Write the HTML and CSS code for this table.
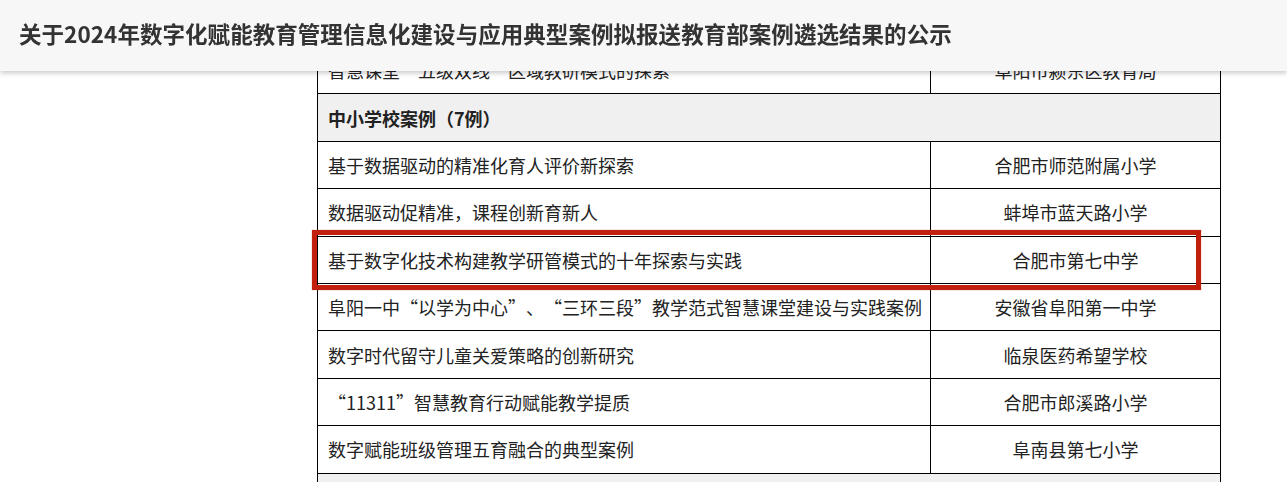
FILE: index.html
```html
<!DOCTYPE html>
<html lang="zh-CN">
<head>
<meta charset="utf-8">
<title>公示</title>
<link rel="stylesheet" href="styles.css">
</head>
<body>
<header class="topbar">
  <h1 class="topbar-title">关于2024年数字化赋能教育管理信息化建设与应用典型案例拟报送教育部案例遴选结果的公示</h1>
</header>
<main class="content">
  <div class="table-wrap">
    <table class="cases">
      <colgroup><col class="col-name"><col class="col-unit"></colgroup>
      <tbody>
        <tr><td class="name">智慧课堂<span class="q qo">“</span>五级双线<span class="q qc">”</span>区域教研模式的探索</td><td class="unit">阜阳市颍东区教育局</td></tr>
        <tr class="section"><td colspan="2">中小学校案例（7例）</td></tr>
        <tr><td class="name">基于数据驱动的精准化育人评价新探索</td><td class="unit">合肥市师范附属小学</td></tr>
        <tr><td class="name">数据驱动促精准，课程创新育新人</td><td class="unit">蚌埠市蓝天路小学</td></tr>
        <tr><td class="name">基于数字化技术构建教学研管模式的十年探索与实践</td><td class="unit">合肥市第七中学</td></tr>
        <tr><td class="name">阜阳一中<span class="q qo">“</span>以学为中心<span class="q qc">”</span><span class="q qd">、</span><span class="q qo">“</span>三环三段<span class="q qc">”</span>教学范式智慧课堂建设与实践案例</td><td class="unit">安徽省阜阳第一中学</td></tr>
        <tr><td class="name">数字时代留守儿童关爱策略的创新研究</td><td class="unit">临泉医药希望学校</td></tr>
        <tr><td class="name"><span class="q qo">“</span>11311<span class="q qc">”</span>智慧教育行动赋能教学提质</td><td class="unit">合肥市郎溪路小学</td></tr>
        <tr><td class="name">数字赋能班级管理五育融合的典型案例</td><td class="unit">阜南县第七小学</td></tr>
        <tr class="section"><td colspan="2">&nbsp;</td></tr>
      </tbody>
    </table>
    <div class="highlight"></div>
  </div>
</main>
</body>
</html>
```

FILE: styles.css
```css
* { box-sizing: border-box; }
html, body {
  margin: 0;
  padding: 0;
  background: #ffffff;
  overflow: hidden;
}
body {
  font-family: "Noto Sans CJK SC", "Noto Sans", sans-serif;
  color: #222;
}
.topbar {
  position: fixed;
  top: 0;
  left: 0;
  right: 0;
  height: 71px;
  background: #f7f7f7;
  box-shadow: 0 2px 5px rgba(0, 0, 0, 0.22);
  display: flex;
  align-items: center;
  padding-left: 19px;
  z-index: 10;
}
.topbar-title {
  margin: 0;
  font-size: 22.5px;
  font-weight: 700;
  color: #333;
  line-height: 1;
  letter-spacing: 0.05px;
  padding-bottom: 4px;
}
.content {
  padding-top: 46px;
  padding-left: 317px;
}
.table-wrap {
  position: relative;
  width: 903px;
}
.cases {
  width: 903px;
  border-collapse: collapse;
  table-layout: fixed;
  font-size: 18px;
}
.col-name { width: 613px; }
.col-unit { width: 290px; }
.cases td {
  border: 1px solid #000;
  height: 47.4px;
  padding: 0 10px;
  vertical-align: middle;
  white-space: nowrap;
  line-height: 1;
}
.cases td.unit { text-align: center; }
.cases tr.section td {
  background: #f0f0f0;
  font-weight: 700;
}
.q {
  display: inline-block;
  width: 18px;
}
.qo { text-align: right; }
.qc { text-align: left; }
.qd { text-align: left; }
.highlight {
  position: absolute;
  left: -5px;
  top: 184px;
  width: 889px;
  height: 60px;
  border: 5px solid #c2200e;
  box-shadow: 0 0 1px rgba(194, 32, 14, 0.6);
  pointer-events: none;
}
```
